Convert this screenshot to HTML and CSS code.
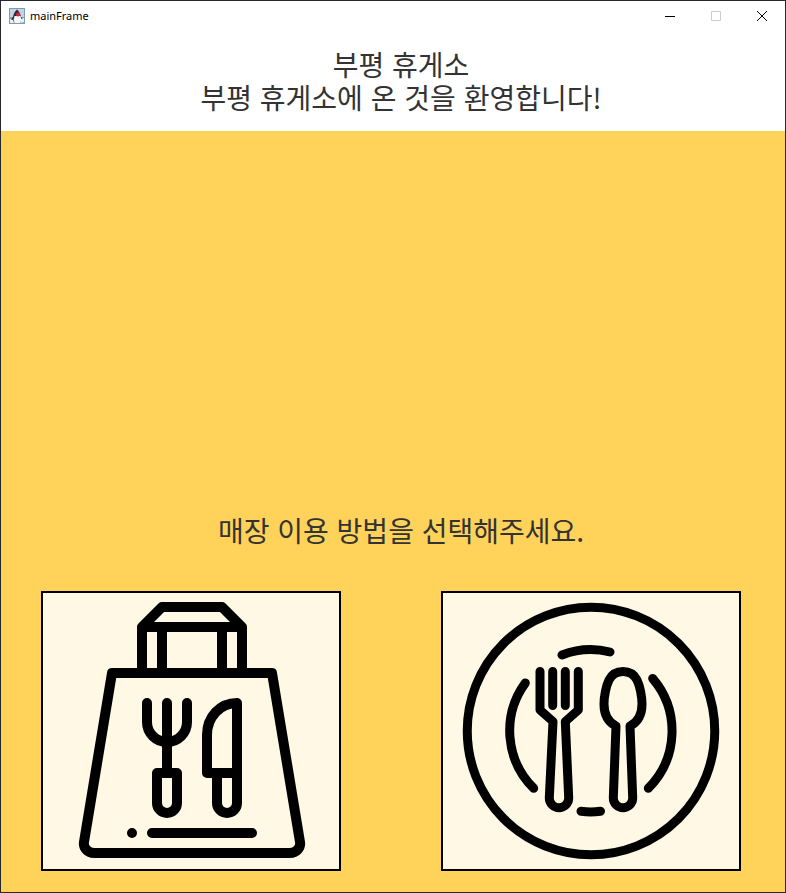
FILE: index.html
```
<!DOCTYPE html>
<html lang="ko">
<head>
<meta charset="utf-8">
<meta name="viewport" content="width=device-width, initial-scale=1">
<title>mainFrame</title>
<link rel="stylesheet" href="styles.css">
</head>
<body>
<div class="window">
  <div class="titlebar">
    <svg class="app-icon" viewBox="0 0 16 16" aria-hidden="true">
      <rect x="0.5" y="0.5" width="15" height="15" fill="#c3d3e2" stroke="#8299b3"/>
      <path d="M1 9h14v6H1z" fill="#91a0b1"/>
      <path d="M8 1.500C6 3 4.500 6 4 9l-2.500 3 2 1.500h9l2-1.500-2.500-3C11.500 6 10 3 8 1.500z" fill="#272c35"/>
      <path d="M5.500 8h6l1 4-1.500 3H6L4.500 12z" fill="#f5f7fa"/>
      <path d="M1 11l3 1 1 3H1zM12 11l3-1v4l-3 1z" fill="#e8eef4"/>
      <circle cx="9" cy="6.500" r="2" fill="#dd2638"/>
    </svg>
    <span class="title">mainFrame</span>
    <div class="controls">
      <button class="control" type="button" aria-label="최소화">
        <svg viewBox="0 0 10 10"><path d="M0 5.500h10"/></svg>
      </button>
      <button class="control" type="button" aria-label="최대화" disabled>
        <svg viewBox="0 0 10 10"><path d="M0.500 0.500h9v9h-9z"/></svg>
      </button>
      <button class="control" type="button" aria-label="닫기">
        <svg viewBox="0 0 10 10"><path d="M0 0l10 10M10 0L0 10"/></svg>
      </button>
    </div>
  </div>

  <header class="welcome">
    <h1 class="message">부평 휴게소</h1>
    <p class="message">부평 휴게소에 온 것을 환영합니다!</p>
  </header>

  <main class="content">
    <p class="message">매장 이용 방법을 선택해주세요.</p>
    <div class="choices">
      <button class="choice" type="button" aria-label="포장">
        <svg class="picture bag" viewBox="63 603 256 256">
          <path d="M142 673V627L162 607H222L242 627V673M142 627H242M162 627V673M222 627V673"/>
          <path d="M112 673H272L300 842C301 848 296 853 290 853H94C88 853 83 848 84 842Z"/>
          <path d="M147 703V722a20 20 0 0 0 40 0V703M167 703V773M157 773H177V803a10 10 0 0 1-20 0Z"/>
          <path d="M237 773H207V735C207 717 220 703 237 703V803a10 10 0 0 1-20 0V773"/>
          <path d="M132 833h0M152 833H252"/>
        </svg>
      </button>
      <button class="choice" type="button" aria-label="매장 식사">
        <svg class="picture plate" viewBox="463 603 256 256">
          <circle cx="591" cy="731" r="123.750"/>
          <path d="M562 655A81 81 0 0 1 610 652M525.300 683A81 81 0 0 0 533.700 788.300M652.700 678.500A81 81 0 0 1 648.300 788.300M581 811.300A81 81 0 0 0 600.500 811.300"/>
          <path d="M540 671.500V710L553 721.500L549.300 798a9.700 9.700 0 0 0 19.400 0L565.300 721.500L578.300 710V671.500M552.700 671.500V705.500M565.300 671.500V705.500"/>
          <path d="M616 726C606 721 604 712 604 704C604 697 606 686 609 680C612 674 617 671.500 623 671.500C629 671.500 634 674 637 680C640 686 642 697 642 704C642 712 640 721 630 726L632.700 798a9.700 9.700 0 0 1-19.400 0Z"/>
        </svg>
      </button>
    </div>
  </main>
</div>
</body>
</html>
```
FILE: styles.css
```
* {
  box-sizing: border-box;
}

body {
  margin: 0;
  color: #333;
  font-family: "Noto Sans CJK KR", sans-serif;
}

.window {
  display: flex;
  flex-direction: column;
  min-height: 100vh;
  border: 1px solid #28282c;
  background: #fff;
}

.titlebar {
  display: flex;
  align-items: center;
  height: 30px;
  padding-left: 8px;
}

.app-icon {
  width: 16px;
  height: 16px;
}

.title {
  margin-left: 5px;
  color: #000;
  font: 11px/16px "Noto Sans", sans-serif;
}

.controls {
  display: flex;
  height: 100%;
  margin-left: auto;
}

.control {
  display: flex;
  align-items: center;
  justify-content: center;
  width: 46px;
  padding: 0;
  border: 0;
  background: none;
  color: #000;
}

.control:disabled {
  color: #ccc;
}

.control svg {
  width: 10px;
  height: 10px;
  fill: none;
  stroke: currentColor;
}

.welcome {
  padding: 17px 0 17px 16px;
}

.message {
  margin: 0;
  font-size: 28px;
  font-weight: 400;
  line-height: 33px;
  text-align: center;
}

.content {
  display: flex;
  flex: 1;
  flex-direction: column;
  justify-content: flex-end;
  padding-bottom: 21px;
  background: #ffd25a;
}

.content .message {
  padding-left: 16px;
}

.choices {
  display: grid;
  grid-template-columns: 1fr 1fr;
  gap: 100px;
  margin-top: 44px;
  padding: 0 44px 0 40px;
}

.choice {
  display: flex;
  align-items: center;
  justify-content: center;
  height: 280px;
  padding: 0;
  border: 2px solid #000;
  background: #fff8e5;
}

.picture {
  width: 256px;
  height: 256px;
  overflow: visible;
  fill: none;
  stroke: #000;
  stroke-linecap: round;
  stroke-linejoin: round;
}

.bag {
  stroke-width: 10px;
}

.plate {
  stroke-width: 9px;
}
```
